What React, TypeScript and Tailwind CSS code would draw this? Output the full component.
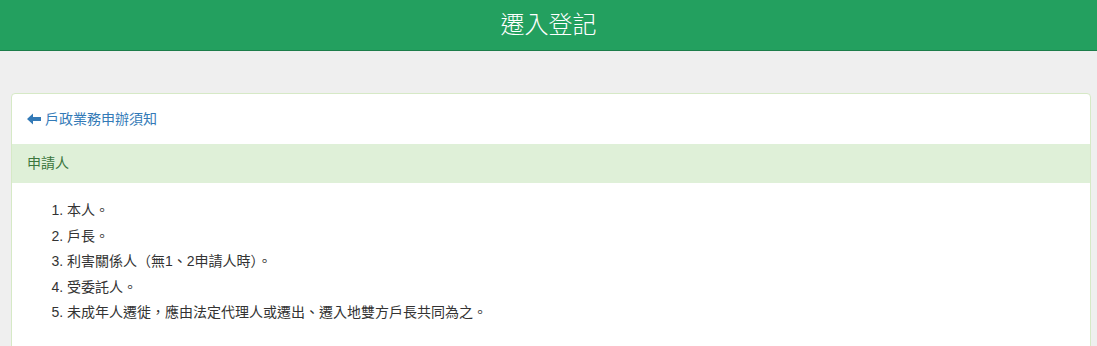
const items = [
  "本人。",
  "戶長。",
  "利害關係人（無1、2申請人時）。",
  "受委託人。",
  "未成年人遷徙，應由法定代理人或遷出、遷入地雙方戶長共同為之。",
];

function ArrowLeft() {
  return (
    <svg width="14" height="12" viewBox="0 0 14 12" className="mr-[4px]">
      <path d="M0 6 L6 0.5 L6 4 L14 4 L14 8 L6 8 L6 11.5 Z" fill="#337ab7" />
    </svg>
  );
}

export default function App() {
  return (
    <div
      className="min-h-screen bg-[#efefef] text-[14px] text-[#333]"
      style={{ fontFamily: '"Liberation Sans", "Noto Sans CJK TC", sans-serif' }}
    >
      <header className="h-[51px] bg-[#23a05f] border-b border-[#1c7d4a] flex items-center justify-center">
        <h1 className="text-[24px] text-white leading-none font-light">遷入登記</h1>
      </header>

      <div className="pl-[11px] pr-[6px] pt-[42px]">
        <div className="bg-white border border-[#d6e9c6] rounded-[4px]">
          <div className="px-[15px] pt-[15px] pb-[15px]">
            <a className="flex items-center text-[#337ab7] leading-[20px]" href="#">
              <ArrowLeft />
              <span>戶政業務申辦須知</span>
            </a>
          </div>
          <div className="bg-[#dff0d8] text-[#3c763d] px-[15px] py-[10px] leading-[19px]">申請人</div>
          <div className="px-[15px] pt-[15px] pb-[40px]">
            <ol className="list-decimal pl-[40px] leading-[25.5px]">
              {items.map((t) => (
                <li key={t}>{t}</li>
              ))}
            </ol>
          </div>
        </div>
      </div>
    </div>
  );
}
